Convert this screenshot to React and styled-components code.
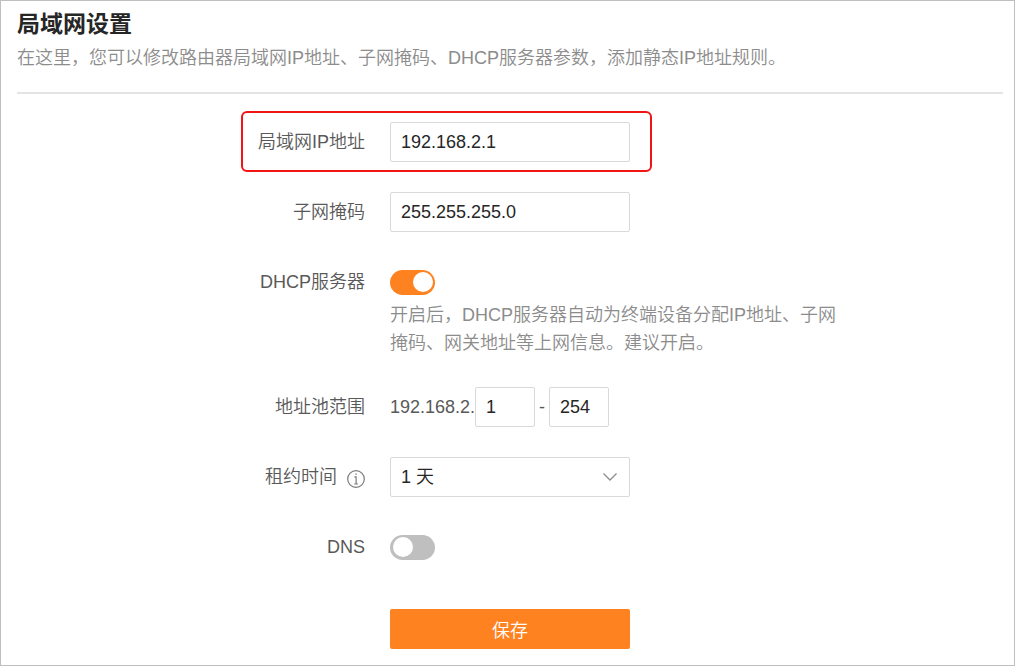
import { useState } from "react";
import styled, { createGlobalStyle } from "styled-components";

function App() {
	const [dhcp, setDhcp] = useState(true);
	const [dns, setDns] = useState(false);

	return (
		<>
			<GlobalStyle />
			<StyledPage>
				<StyledHeader>
					<StyledTitle>局域网设置</StyledTitle>
					<StyledDescription>
						在这里，您可以修改路由器局域网IP地址、子网掩码、DHCP服务器参数，添加静态IP地址规则。
					</StyledDescription>
				</StyledHeader>
				<StyledForm onSubmit={(e) => e.preventDefault()}>
					<StyledRow $highlight>
						<StyledLabel htmlFor="lan-ip">局域网IP地址</StyledLabel>
						<StyledInput id="lan-ip" type="text" defaultValue="192.168.2.1" />
					</StyledRow>
					<StyledRow>
						<StyledLabel htmlFor="mask">子网掩码</StyledLabel>
						<StyledInput id="mask" type="text" defaultValue="255.255.255.0" />
					</StyledRow>
					<StyledRow>
						<StyledLabel htmlFor="dhcp">DHCP服务器</StyledLabel>
						<StyledField>
							<StyledSwitch
								id="dhcp"
								type="checkbox"
								role="switch"
								checked={dhcp}
								onChange={(e) => setDhcp(e.target.checked)}
							/>
							<StyledHint>
								开启后，DHCP服务器自动为终端设备分配IP地址、子网掩码、网关地址等上网信息。建议开启。
							</StyledHint>
						</StyledField>
					</StyledRow>
					<StyledRow>
						<StyledLabel htmlFor="pool-start">地址池范围</StyledLabel>
						<StyledRange>
							<span>192.168.2.</span>
							<StyledInput id="pool-start" type="text" defaultValue="1" $short />
							<StyledDash>-</StyledDash>
							<StyledInput type="text" defaultValue="254" aria-label="地址池结束地址" $short />
						</StyledRange>
					</StyledRow>
					<StyledRow>
						<StyledLabel htmlFor="lease">
							租约时间
							<InfoIcon />
						</StyledLabel>
						<StyledSelectBox>
							<StyledSelect id="lease" defaultValue="1">
								<option value="1">1 天</option>
								<option value="7">7 天</option>
							</StyledSelect>
							<StyledChevron viewBox="0 0 16 10" aria-hidden="true">
								<path d="M1.5 1.5 8 8l6.5-6.5" />
							</StyledChevron>
						</StyledSelectBox>
					</StyledRow>
					<StyledRow>
						<StyledLabel htmlFor="dns">DNS</StyledLabel>
						<StyledField>
							<StyledSwitch
								id="dns"
								type="checkbox"
								role="switch"
								checked={dns}
								onChange={(e) => setDns(e.target.checked)}
							/>
						</StyledField>
					</StyledRow>
					<StyledButton type="submit">保存</StyledButton>
				</StyledForm>
			</StyledPage>
		</>
	);
}

function InfoIcon() {
	return (
		<StyledInfo viewBox="0 0 18 18" aria-hidden="true">
			<circle cx="9" cy="9" r="8.3" />
			<path d="M7.4 6.8h1.7v7.2M7.2 14h3.8" />
			<path d="M8.4 4.2h1.4" />
		</StyledInfo>
	);
}

const GlobalStyle = createGlobalStyle`
	*, *::before, *::after {
		box-sizing: border-box;
	}
	body {
		margin: 0;
		background-color: white;
	}
	body, input, select, button {
		font-family: "Liberation Sans", "Noto Sans CJK SC", sans-serif;
		font-size: 18px;
		font-weight: 350;
	}
`;
const StyledPage = styled.main`
	min-height: 100vh;
	padding: 7px 11px 16px 16px;
	border: 1px solid #bfbfbf;
`;
const StyledHeader = styled.header`
	padding-bottom: 20px;
	border-bottom: 2px solid #e4e4e4;
`;
const StyledTitle = styled.h1`
	margin: 0 0 4px;
	font-size: 23px;
	font-weight: 700;
	line-height: 32px;
	color: #262626;
`;
const StyledDescription = styled.p`
	margin: 0;
	line-height: 28px;
	color: #8c8c8c;
`;
const StyledForm = styled.form`
	display: flex;
	flex-direction: column;
	gap: 30px;
	padding-top: 28px;
`;
const StyledRow = styled.div`
	position: relative;
	display: flex;
	align-items: flex-start;
	min-height: 40px;

	&::after {
		content: ${(props) => (props.$highlight ? '""' : "none")};
		position: absolute;
		top: -11px;
		bottom: -10px;
		left: calc(50% - 269px);
		width: 411px;
		border: 2px solid #f01414;
		border-radius: 6px;
		pointer-events: none;
	}
`;
const StyledLabel = styled.label`
	display: flex;
	flex: none;
	align-items: center;
	justify-content: flex-end;
	gap: 10px;
	width: calc(50% - 120px);
	padding-right: 25px;
	line-height: 40px;
	color: #595959;
`;
const StyledInput = styled.input`
	width: ${(props) => (props.$short ? "60px" : "240px")};
	height: 40px;
	padding: 0 10px;
	border: 1px solid #d9d9d9;
	border-radius: 2px;
	background-color: white;
	color: #262626;
	outline: none;
`;
const StyledField = styled.div`
	padding-top: 8px;
`;
const StyledSwitch = styled.input`
	display: block;
	appearance: none;
	width: 45px;
	height: 25px;
	margin: 0;
	padding: 2px 3px;
	border-radius: 13px;
	background-color: #bfbfbf;
	cursor: pointer;

	&::before {
		content: "";
		display: block;
		width: 20px;
		height: 20px;
		border-radius: 50%;
		background-color: white;
	}
	&:checked {
		padding-left: 23px;
		background-color: #ff8220;
	}
`;
const StyledHint = styled.p`
	max-width: 450px;
	margin: 6px 0 0;
	line-height: 28px;
	color: #8c8c8c;
`;
const StyledRange = styled.div`
	display: flex;
	align-items: center;
	line-height: 40px;
	color: #595959;
`;
const StyledDash = styled.span`
	width: 14px;
	text-align: center;
`;
const StyledSelectBox = styled.div`
	position: relative;
	width: 240px;
`;
const StyledSelect = styled.select`
	display: block;
	appearance: none;
	width: 100%;
	height: 40px;
	padding: 0 36px 0 10px;
	border: 1px solid #d9d9d9;
	border-radius: 2px;
	background-color: white;
	color: #262626;
`;
const StyledChevron = styled.svg`
	position: absolute;
	top: 15px;
	right: 12px;
	width: 16px;
	height: 10px;
	fill: none;
	stroke: #8c8c8c;
	stroke-width: 1.3;
	pointer-events: none;
`;
const StyledInfo = styled.svg`
	width: 18px;
	height: 18px;
	margin-top: 4px;
	fill: none;
	stroke: #7a7a7a;
	stroke-width: 1.2;
`;
const StyledButton = styled.button`
	width: 240px;
	height: 40px;
	margin-top: 12px;
	margin-left: calc(50% - 120px);
	border: none;
	border-radius: 2px;
	background-color: #ff8220;
	color: white;
	cursor: pointer;
`;
export default App;
